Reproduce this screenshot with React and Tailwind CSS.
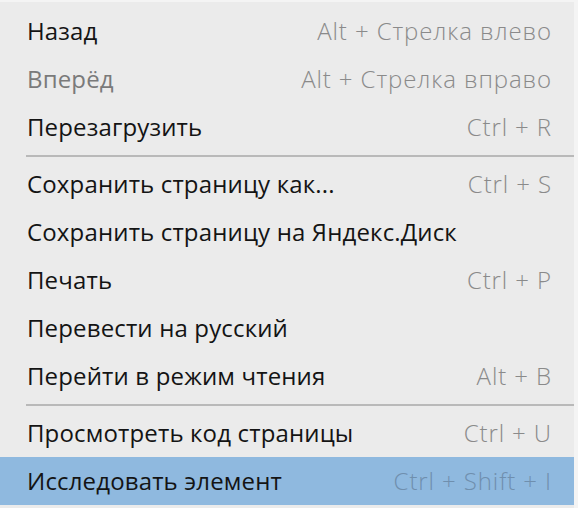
import React from "react";

const groups = [
  [
    { label: "Назад", keys: "Alt + Стрелка влево" },
    { label: "Вперёд", keys: "Alt + Стрелка вправо", disabled: true },
    { label: "Перезагрузить", keys: "Ctrl + R" },
  ],
  [
    { label: "Сохранить страницу как...", keys: "Ctrl + S" },
    { label: "Сохранить страницу на Яндекс.Диск" },
    { label: "Печать", keys: "Ctrl + P" },
    { label: "Перевести на русский" },
    { label: "Перейти в режим чтения", keys: "Alt + B" },
  ],
  [
    { label: "Просмотреть код страницы", keys: "Ctrl + U" },
    { label: "Исследовать элемент", keys: "Ctrl + Shift + I", active: true },
  ],
];

function MenuItem({ item }) {
  return (
    <div
      className={
        "flex h-12 items-center justify-between pl-[27px] pr-[22px] " +
        (item.active ? "bg-[#8fb9df]" : "")
      }
    >
      <span
        className={
          "text-[24px] tracking-[0.15px] " +
          (item.disabled ? "text-[#7a7a7a]" : "text-[#141414]")
        }
      >
        {item.label}
      </span>
      {item.keys && (
        <span
          className={
            "text-[24px] font-light tracking-[0.9px] " +
            (item.active ? "text-[#6f8fae]" : "text-[#8a8a8a]")
          }
        >
          {item.keys}
        </span>
      )}
    </div>
  );
}

export default function App() {
  return (
    <div className="h-[508px] w-[578px] overflow-hidden bg-[#f4f4f4] font-['Open_Sans',sans-serif]">
      <div className="mr-[4px] mt-[2px] h-full bg-[#ebebeb] pt-[5px]">
        {groups.map((group, gi) => (
          <div key={gi}>
            {gi > 0 && (
              <div className="flex h-[9px] items-center pl-[26px]">
                <div className="h-[2px] w-full bg-[#b9b9b9]" />
              </div>
            )}
            {group.map((item) => (
              <MenuItem key={item.label} item={item} />
            ))}
          </div>
        ))}
      </div>
    </div>
  );
}
